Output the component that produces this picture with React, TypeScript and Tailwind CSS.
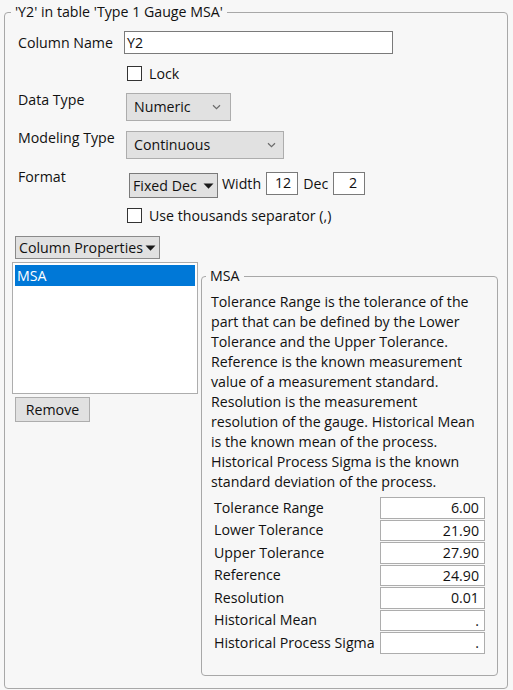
import React from "react";

function Chevron() {
  return (
    <svg width="9" height="6" viewBox="0 0 9 6" className="block">
      <path d="M1 1.2 L4.5 4.6 L8 1.2" fill="none" stroke="#6b6b6b" strokeWidth="1.2" />
    </svg>
  );
}

function Tri() {
  return (
    <svg width="11" height="6" viewBox="0 0 11 6" className="block">
      <path d="M0.5 0.5 L10.5 0.5 L5.5 5.8 Z" fill="#1a1a1a" />
    </svg>
  );
}

const desc = [
  "Tolerance Range is the tolerance of the",
  "part that can be defined by the Lower",
  "Tolerance and the Upper Tolerance.",
  "Reference is the known measurement",
  "value of a measurement standard.",
  "Resolution is the measurement",
  "resolution of the gauge. Historical Mean",
  "is the known mean of the process.",
  "Historical Process Sigma is the known",
  "standard deviation of the process.",
];

const rows: [string, string][] = [
  ["Tolerance Range", "6.00"],
  ["Lower Tolerance", "21.90"],
  ["Upper Tolerance", "27.90"],
  ["Reference", "24.90"],
  ["Resolution", "0.01"],
  ["Historical Mean", "."],
  ["Historical Process Sigma", "."],
];

export default function App() {
  return (
    <div className="w-[513px] h-[690px] bg-[#f7f7f7] font-['Open_Sans',sans-serif] text-[14.2px] text-[#111] pt-[2px] pl-[4px] overflow-hidden">
      <fieldset className="w-[504px] h-[687px] border border-[#a8a8a8] rounded-[4px] p-0 m-0">
        <legend className="ml-[6px] px-[4px] leading-[20px]">'Y2' in table 'Type 1 Gauge MSA'</legend>

        <div className="pl-[13px]">
          {/* Column Name */}
          <div className="flex items-center mt-[9px] h-[23px]">
            <div className="w-[106px] leading-[20px]">Column Name</div>
            <div className="w-[269px] h-[23px] border border-[#7a7a7a] bg-white pl-[2px] leading-[21px]">Y2</div>
          </div>

          {/* Lock */}
          <div className="flex items-center mt-[12px] ml-[109px] h-[15px]">
            <div className="w-[15px] h-[15px] border border-[#333] bg-white" />
            <div className="ml-[7px] leading-[20px]">Lock</div>
          </div>

          {/* Data Type */}
          <div className="flex items-start mt-[9px]">
            <div className="w-[108px] leading-[20px]">Data Type</div>
            <div className="mt-[3px] w-[105px] h-[28px] border border-[#adadad] bg-[#e1e1e1] flex items-center justify-between pl-[7px] pr-[9px]">
              <span className="leading-[20px]">Numeric</span>
              <Chevron />
            </div>
          </div>

          {/* Modeling Type */}
          <div className="flex items-start mt-[7px]">
            <div className="w-[108px] leading-[20px]">Modeling Type</div>
            <div className="mt-[3px] w-[158px] h-[28px] border border-[#adadad] bg-[#e1e1e1] flex items-center justify-between pl-[7px] pr-[7px]">
              <span className="leading-[20px]">Continuous</span>
              <Chevron />
            </div>
          </div>

          {/* Format */}
          <div className="flex items-start mt-[8px]">
            <div className="w-[111px] leading-[20px]">Format</div>
            <div className="mt-[6px] w-[89px] h-[25px] border border-[#7a7a7a] bg-[#e1e1e1] flex items-center justify-between pl-[3px] pr-[3px]">
              <span className="leading-[20px]">Fixed Dec</span>
              <Tri />
            </div>
            <div className="mt-[6px] ml-[4px] leading-[22px]">Width</div>
            <div className="mt-[5px] ml-[5px] w-[32px] h-[23px] border border-[#7a7a7a] bg-white text-right pr-[6px] leading-[19px]">12</div>
            <div className="mt-[6px] ml-[5px] leading-[22px]">Dec</div>
            <div className="mt-[5px] ml-[5px] w-[32px] h-[23px] border border-[#7a7a7a] bg-white text-right pr-[7px] leading-[19px]">2</div>
          </div>

          {/* thousands */}
          <div className="flex items-center mt-[10px] ml-[109px] h-[15px]">
            <div className="w-[15px] h-[15px] border border-[#333] bg-white" />
            <div className="ml-[7px] leading-[20px]">Use thousands separator (,)</div>
          </div>
        </div>

        {/* Column Properties button */}
        <div className="mt-[13px] ml-[10px] w-[145px] h-[23px] border border-[#8a8a8a] bg-[#e1e1e1] flex items-center justify-between pl-[3px] pr-[3px]">
          <span className="leading-[20px]">Column Properties</span>
          <Tri />
        </div>

        <div className="flex items-start mt-[3px] ml-[7px]">
          {/* left column */}
          <div className="flex flex-col">
            <div className="w-[186px] h-[132px] border border-[#adadad] bg-white p-[2px]">
              <div className="h-[21px] bg-[#0078d7] text-white pl-[2px] leading-[21px]">MSA</div>
            </div>
            <div className="mt-[3px] ml-[3px] w-[75px] h-[25px] border border-[#adadad] bg-[#e1e1e1] flex items-center justify-center leading-[20px]">
              Remove
            </div>
          </div>

          {/* MSA fieldset */}
          <fieldset className="ml-[3px] mt-[4px] w-[297px] h-[410px] border border-[#a8a8a8] rounded-[4px] p-0 m-0">
            <legend className="ml-[4px] px-[4px] leading-[20px]">MSA</legend>
            <div className="pl-[9px] mt-[6px]">
              {desc.map((l, i) => (
                <div key={i} className="leading-[20px] whitespace-nowrap">{l}</div>
              ))}
            </div>
            <div className="mt-[5px] pl-[12px] flex flex-col gap-[1px]">
              {rows.map(([k, v]) => (
                <div key={k} className="flex items-center h-[21.5px]">
                  <div className="w-[166px] leading-[20px] whitespace-nowrap">{k}</div>
                  <div className="w-[105px] h-[21.5px] border border-[#adadad] bg-white text-right pr-[5px] leading-[20px]">{v}</div>
                </div>
              ))}
            </div>
          </fieldset>
        </div>
      </fieldset>
    </div>
  );
}
